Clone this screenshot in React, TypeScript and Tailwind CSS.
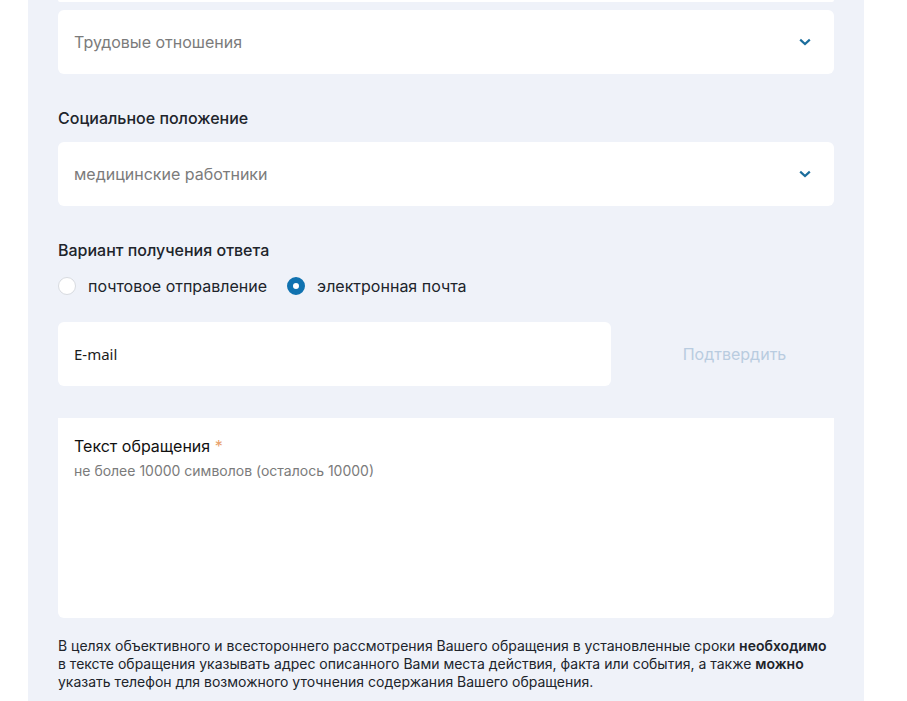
import { useId, useState } from "react";

function Chevron() {
  return (
    <svg
      viewBox="0 0 12 12"
      className="pointer-events-none absolute right-[23px] top-1/2 h-3 w-3 -translate-y-1/2"
      fill="none"
      stroke="#1b6d9c"
      strokeWidth="2.2"
      aria-hidden="true"
    >
      <path d="M1.2 3.6 L6 8 L10.8 3.6" />
    </svg>
  );
}

function SelectBox({ id, label, options }: { id: string; label?: string; options: string[] }) {
  return (
    <div className="relative">
      <select
        id={id}
        aria-label={label}
        className="block h-16 w-full appearance-none rounded-md bg-white px-4 text-base text-[#7b7b7b]"
      >
        {options.map((option) => (
          <option key={option}>{option}</option>
        ))}
      </select>
      <Chevron />
    </div>
  );
}

function RadioOption({
  name,
  text,
  checked,
  onChange,
}: {
  name: string;
  text: string;
  checked: boolean;
  onChange: () => void;
}) {
  const id = useId();
  return (
    <div className="flex items-center gap-3">
      <input
        id={id}
        type="radio"
        name={name}
        checked={checked}
        onChange={onChange}
        className="h-[18px] w-[18px] appearance-none rounded-full border border-[#d8dbe0] bg-white checked:border-[6px] checked:border-[#1072b0]"
      />
      <label htmlFor={id} className="text-base">
        {text}
      </label>
    </div>
  );
}

export default function App() {
  const [answer, setAnswer] = useState("email");
  return (
    <div className="min-h-screen bg-white font-['Inter','Noto_Sans',sans-serif] text-[#20242b]">
      <form className="ml-7 mr-[43px] bg-[#eff2f9] px-[30px] pb-[10px]">
        <div className="h-[2px] rounded-b-md bg-white" />

        <div className="pt-2">
          <SelectBox id="topic" label="Тематика" options={["Трудовые отношения"]} />
        </div>

        <div className="pt-8">
          <label htmlFor="status" className="mb-3 block text-base font-medium leading-6">
            Социальное положение
          </label>
          <SelectBox id="status" options={["медицинские работники"]} />
        </div>

        <fieldset className="pt-8">
          <legend className="contents text-base font-medium leading-6">Вариант получения ответа</legend>
          <div className="flex flex-wrap gap-x-5 pt-3">
            <RadioOption
              name="answer"
              text="почтовое отправление"
              checked={answer === "post"}
              onChange={() => setAnswer("post")}
            />
            <RadioOption
              name="answer"
              text="электронная почта"
              checked={answer === "email"}
              onChange={() => setAnswer("email")}
            />
          </div>
        </fieldset>

        <div className="flex gap-6 pt-6">
          <input
            type="email"
            aria-label="E-mail"
            placeholder="E-mail"
            className="h-16 min-w-0 flex-1 rounded-md bg-white px-4 font-['Noto_Sans',sans-serif] text-[15px] placeholder:text-[#1c1c1c]"
          />
          <button type="button" className="w-[199px] text-base text-[#b9cce0]">
            Подтвердить
          </button>
        </div>

        <div className="mt-8 flex h-[200px] flex-col rounded-b-md bg-white px-4 pt-4">
          <label htmlFor="message" className="text-base text-[#111111]">
            Текст обращения <span className="text-[#e8a06a]">*</span>
          </label>
          <textarea
            id="message"
            placeholder="не более 10000 символов (осталось 10000)"
            className="block w-full flex-1 resize-none pt-1 text-sm leading-[18px] placeholder:text-[#7b7b7b]"
          />
        </div>

        <p className="pt-[19px] text-sm leading-[18px]">
          В целях объективного и всестороннего рассмотрения Вашего обращения в установленные сроки{" "}
          <strong className="font-semibold">необходимо</strong> в тексте обращения указывать адрес описанного Вами места
          действия, факта или события, а также <strong className="font-semibold">можно</strong> указать телефон для
          возможного уточнения содержания Вашего обращения.
        </p>
      </form>
    </div>
  );
}
